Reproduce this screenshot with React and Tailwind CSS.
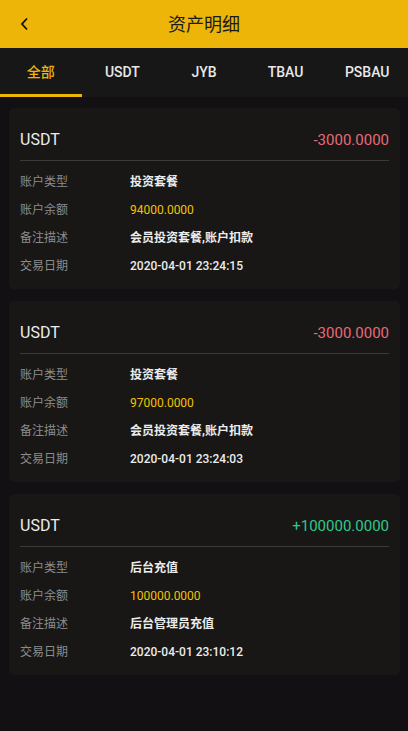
import React from "react";

const records = [
  { amount: "-3000.0000", up: false, type: "投资套餐", balance: "94000.0000", note: "会员投资套餐,账户扣款", date: "2020-04-01 23:24:15" },
  { amount: "-3000.0000", up: false, type: "投资套餐", balance: "97000.0000", note: "会员投资套餐,账户扣款", date: "2020-04-01 23:24:03" },
  { amount: "+100000.0000", up: true, type: "后台充值", balance: "100000.0000", note: "后台管理员充值", date: "2020-04-01 23:10:12" },
];

const tabs = ["全部", "USDT", "JYB", "TBAU", "PSBAU"];

function Row({ label, children, valueClass }) {
  return (
    <div className="flex items-center h-[28px]">
      <div className="w-[110px] text-[12px] text-[#8c8c8c]">{label}</div>
      <div className={"text-[12px] " + valueClass}>{children}</div>
    </div>
  );
}

export default function App() {
  return (
    <div
      className="w-[408px] min-h-[731px] bg-[#121013]"
      style={{ fontFamily: 'Roboto, "Noto Sans CJK SC", sans-serif' }}
    >
      <div className="h-[48px] bg-[#ecb508] flex items-center relative">
        <div className="w-[50px] flex items-center justify-center">
          <svg width="10" height="14" viewBox="0 0 10 14" fill="none">
            <path d="M7 1.5 L2 7 L7 12.5" stroke="#111" strokeWidth="1.8" />
          </svg>
        </div>
        <div className="absolute left-0 right-0 text-center text-[18px] text-[#1a1a1a] pointer-events-none">
          资产明细
        </div>
      </div>
      <div className="h-[49px] bg-[#171717] flex">
        {tabs.map((t, i) => (
          <div key={t} className="flex-1 relative flex items-center justify-center">
            <span className={"text-[14px] font-medium " + (i === 0 ? "text-[#ecb508]" : "text-[#e8e8e8]")}>{t}</span>
            {i === 0 && <div className="absolute left-0 right-0 bottom-0 h-[3px] bg-[#ecb508]" />}
          </div>
        ))}
      </div>
      <div className="pt-[11px] flex flex-col gap-[12px] pb-[40px]">
        {records.map((r, i) => (
          <div key={i} className="ml-[9px] mr-[8px] bg-[#181716] rounded-[5px] px-[11px] pb-[9px]">
            <div className="flex justify-between items-center pt-[20px] pb-[8px] border-b border-[#3a3a3a]">
              <span className="text-[16px] leading-[24px] text-[#ececec]">USDT</span>
              <span className={"text-[15px] leading-[24px] " + (r.up ? "text-[#2fc98c]" : "text-[#e86a78]")}>{r.amount}</span>
            </div>
            <div className="pt-[7px]">
              <Row label="账户类型" valueClass="text-[#ececec] font-bold">{r.type}</Row>
              <Row label="账户余额" valueClass="text-[#f2c200]">{r.balance}</Row>
              <Row label="备注描述" valueClass="text-[#ececec] font-bold">{r.note}</Row>
              <Row label="交易日期" valueClass="text-[#ececec] font-medium">{r.date}</Row>
            </div>
          </div>
        ))}
      </div>
    </div>
  );
}
